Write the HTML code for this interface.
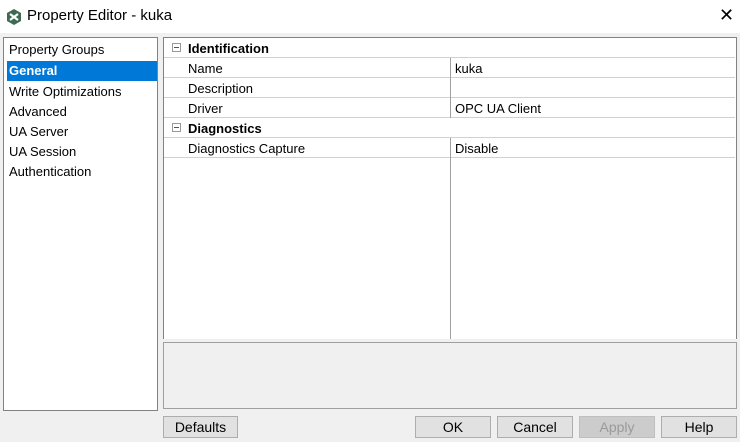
<!DOCTYPE html>
<html><head><style>
body{margin:0;width:740px;height:442px;background:#f0f0f0;font-family:"Liberation Sans",sans-serif;font-size:13px;color:#000;position:relative;overflow:hidden}
.a{position:absolute}
.title{left:0;top:0;width:740px;height:33px;background:#fff}
.row{position:absolute;left:164px;width:571px;height:20px;border-bottom:1px solid #d0d0d0;box-sizing:border-box}
.hdr{background:#fff;z-index:2}
.t{position:absolute;top:3px}
.btn{position:absolute;top:416px;height:22px;background:#e1e1e1;border:1px solid #adadad;box-sizing:border-box;text-align:center;line-height:20px;font-size:14px}
.box{position:absolute;width:9px;height:9px;border:1px solid #999;box-sizing:border-box;left:8px;top:5px}
.box:after{content:"";position:absolute;left:1px;top:3px;width:5px;height:1px;background:#555}
</style></head><body>
<div class="a title"></div>
<svg class="a" style="left:6px;top:9px" width="16" height="16" viewBox="0 0 16 16"><polygon points="8,0 15,4 15,12 8,16 1,12 1,4" fill="#3d6b52"/><path d="M4,5 L12,11 M12,5 L4,11" stroke="#fff" stroke-width="2.2"/></svg>
<div class="a" style="left:27px;top:7px;font-size:15px">Property Editor - kuka</div>
<div class="a" style="left:719px;top:5px;font-size:18px">✕</div>
<div class="a" style="left:3px;top:37px;width:155px;height:374px;background:#fff;border:1px solid #828282;box-sizing:border-box"></div>
<div class="a" style="left:9px;top:42px">Property Groups</div>
<div class="a" style="left:7px;top:61px;width:150px;height:20px;background:#0078d7"></div>
<div class="a" style="left:9px;top:63px;color:#fff;font-weight:bold">General</div>
<div class="a" style="left:9px;top:84px">Write Optimizations</div>
<div class="a" style="left:9px;top:104px">Advanced</div>
<div class="a" style="left:9px;top:124px">UA Server</div>
<div class="a" style="left:9px;top:144px">UA Session</div>
<div class="a" style="left:9px;top:164px">Authentication</div>
<div class="a" style="left:163px;top:37px;width:574px;height:302px;background:#fff;border:1px solid #828282;border-bottom:none;box-sizing:border-box"></div>
<div class="a" style="left:450px;top:58px;width:1px;height:281px;background:#a0a0a0;z-index:1"></div>
<div class="row hdr" style="top:38px"><div class="box"></div><div class="t" style="left:24px;font-weight:bold">Identification</div></div>
<div class="row" style="top:58px"><div class="t" style="left:24px">Name</div><div class="t" style="left:291px">kuka</div></div>
<div class="row" style="top:78px"><div class="t" style="left:24px">Description</div></div>
<div class="row" style="top:98px"><div class="t" style="left:24px">Driver</div><div class="t" style="left:291px">OPC UA Client</div></div>
<div class="row hdr" style="top:118px"><div class="box"></div><div class="t" style="left:24px;font-weight:bold">Diagnostics</div></div>
<div class="row" style="top:138px"><div class="t" style="left:24px">Diagnostics Capture</div><div class="t" style="left:291px">Disable</div></div>
<div class="a" style="left:163px;top:342px;width:574px;height:67px;border:1px solid #a0a0a0;box-sizing:border-box;background:#f0f0f0"></div>
<div class="btn" style="left:163px;width:75px">Defaults</div>
<div class="btn" style="left:415px;width:76px">OK</div>
<div class="btn" style="left:497px;width:76px">Cancel</div>
<div class="btn" style="left:579px;width:76px;background:#cccccc;border-color:#bfbfbf;color:#9a9a9a">Apply</div>
<div class="btn" style="left:661px;width:76px">Help</div>
</body></html>
